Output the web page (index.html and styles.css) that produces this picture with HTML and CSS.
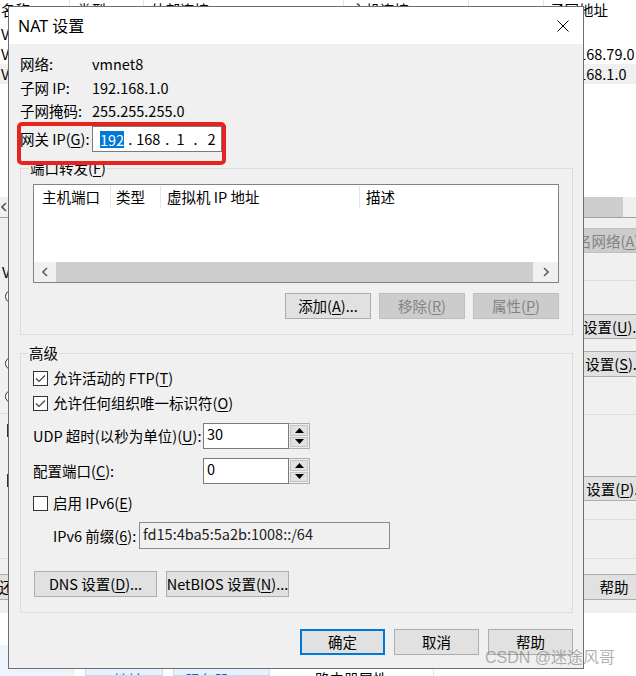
FILE: index.html
```html
<!DOCTYPE html>
<html lang="zh-CN">
<head>
<meta charset="utf-8">
<title>NAT 设置</title>
<link rel="stylesheet" href="styles.css">
</head>
<body>
<div class="desktop">
  <div class="bgwin">
    <div class="bg-list">
      <div class="bg-head">
        <div class="bg-cell c1">名称</div>
        <div class="bg-cell c2">类型</div>
        <div class="bg-cell c3">外部连接</div>
        <div class="bg-cell c4">主机连接</div>
        <div class="bg-cell c5"></div>
        <div class="bg-cell c6">子网地址</div>
      </div>
      <div class="bg-row">
        <div class="bg-cell c1">VMnet0</div>
        <div class="bg-cell c2">桥接模式</div>
        <div class="bg-cell c3">自动桥接</div>
        <div class="bg-cell c4">-</div>
        <div class="bg-cell c5">-</div>
        <div class="bg-cell c6"></div>
      </div>
      <div class="bg-row">
        <div class="bg-cell c1">VMnet1</div>
        <div class="bg-cell c2">仅主机</div>
        <div class="bg-cell c3">-</div>
        <div class="bg-cell c4">已连接</div>
        <div class="bg-cell c5">已启用</div>
        <div class="bg-cell c6">192.168.79.0</div>
      </div>
      <div class="bg-row sel">
        <div class="bg-cell c1">VMnet8</div>
        <div class="bg-cell c2">NAT 模式</div>
        <div class="bg-cell c3">NAT 模式</div>
        <div class="bg-cell c4">已连接</div>
        <div class="bg-cell c5">已启用</div>
        <div class="bg-cell c6">192.168.1.0</div>
      </div>
    </div>
    <div class="bg-hscroll">
      <div class="hs-arrow"><svg width="6" height="10" viewBox="0 0 6 10"><polyline points="5,1 1,5 5,9" fill="none" stroke="#555" stroke-width="1.6"/></svg></div>
      <div class="hs-thumb"></div>
      <div class="hs-end"></div>
    </div>
    <div class="bg-panel">
      <div class="bg-main">
        <div class="bg-left">
          <div class="bg-text">VMnet 信息</div>
          <div class="bg-radio r-a"></div>
          <div class="bg-radio r-b"></div>
          <div class="bg-radio r-c"></div>
          <div class="bg-hr l-hr"></div>
          <div class="bg-box b-a"></div>
          <div class="bg-box b-b"></div>
        </div>
        <div class="bg-right">
          <div class="bg-btn dis rb1">重命名网络(<u>A</u>)</div>
          <div class="bg-hr rh1"></div>
          <div class="bg-btn rb2">自动设置(<u>U</u>)...</div>
          <div class="bg-btn rb3">NAT 设置(<u>S</u>)...</div>
          <div class="bg-hr rh2"></div>
          <div class="bg-btn rb4">DHCP 设置(<u>P</u>)...</div>
          <div class="bg-hr rh3"></div>
        </div>
      </div>
      <div class="bg-panel-foot">
        <div class="bg-btn restore">还原默认设置(<u>R</u>)</div>
        <div class="bg-btn help">帮助</div>
      </div>
    </div>
    <div class="bg-gap"></div>
    <div class="bg-foot">
      <div class="bf bf-a"></div>
      <div class="bf bf-b">IP 地址</div>
      <div class="bf bf-c">服务器</div>
      <div class="bf bf-d">路由器属性</div>
    </div>
  </div>

  <div class="dialog">
    <div class="titlebar">
      <span class="title">NAT 设置</span>
      <svg class="close" width="12" height="12" viewBox="0 0 12 12"><path d="M0.5 0.5L11.5 11.5M11.5 0.5L0.5 11.5" stroke="#000" stroke-width="1" fill="none"/></svg>
    </div>
    <div class="dlg-body">
      <div class="info-row r1"><span class="lbl">网络:</span><span>vmnet8</span></div>
      <div class="info-row r2"><span class="lbl">子网 IP:</span><span>192.168.1.0</span></div>
      <div class="info-row r3"><span class="lbl">子网掩码:</span><span>255.255.255.0</span></div>
      <div class="info-row gw">
        <span class="lbl">网关 IP(<u>G</u>):</span>
        <div class="ipbox">
          <span class="ipsel">192</span><span class="ip-d d1">.</span><span class="ip-s s2">168</span><span class="ip-d d2">.</span><span class="ip-s s3">1</span><span class="ip-d d3">.</span><span class="ip-s s4">2</span>
        </div>
      </div>

      <div class="group g1">
        <div class="group-title">端口转发(<u>F</u>)</div>
        <div class="listview">
          <div class="lv-head">
            <div class="lv-h h1">主机端口</div>
            <div class="lv-h h2">类型</div>
            <div class="lv-h h3">虚拟机 IP 地址</div>
            <div class="lv-h h4">描述</div>
          </div>
          <div class="lv-space"></div>
          <div class="lv-scroll">
            <div class="lv-arrow la"><svg width="6" height="10" viewBox="0 0 6 10"><polyline points="5,1 1,5 5,9" fill="none" stroke="#606060" stroke-width="1.6"/></svg></div>
            <div class="lv-thumb"></div>
            <div class="lv-arrow ra"><svg width="6" height="10" viewBox="0 0 6 10"><polyline points="1,1 5,5 1,9" fill="none" stroke="#606060" stroke-width="1.6"/></svg></div>
          </div>
        </div>
        <div class="btn-row">
          <div class="btn">添加(<u>A</u>)...</div>
          <div class="btn dis">移除(<u>R</u>)</div>
          <div class="btn dis">属性(<u>P</u>)</div>
        </div>
      </div>

      <div class="group g2">
        <div class="group-title">高级</div>
        <div class="cb-row cr1">
          <svg class="cb" width="15" height="15" viewBox="0 0 15 15"><rect x="0.5" y="0.5" width="14" height="14" fill="#fff" stroke="#333"/><polyline points="3,7.5 6,10.5 12,4.5" fill="none" stroke="#444" stroke-width="1.2"/></svg>
          <span>允许活动的 FTP(<u>T</u>)</span>
        </div>
        <div class="cb-row cr2">
          <svg class="cb" width="15" height="15" viewBox="0 0 15 15"><rect x="0.5" y="0.5" width="14" height="14" fill="#fff" stroke="#333"/><polyline points="3,7.5 6,10.5 12,4.5" fill="none" stroke="#444" stroke-width="1.2"/></svg>
          <span>允许任何组织唯一标识符(<u>O</u>)</span>
        </div>
        <div class="spin-row sr1">
          <span class="spin-lbl">UDP 超时(以秒为单位)(<u>U</u>):</span>
          <div class="spin">
            <div class="spin-field">30</div>
            <div class="spin-btns">
              <div class="spin-b"><svg width="9" height="5" viewBox="0 0 9 5"><polygon points="4.5,0 9,5 0,5" fill="#000"/></svg></div>
              <div class="spin-b"><svg width="9" height="5" viewBox="0 0 9 5"><polygon points="0,0 9,0 4.5,5" fill="#000"/></svg></div>
            </div>
          </div>
        </div>
        <div class="spin-row sr2">
          <span class="spin-lbl">配置端口(<u>C</u>):</span>
          <div class="spin">
            <div class="spin-field">0</div>
            <div class="spin-btns">
              <div class="spin-b"><svg width="9" height="5" viewBox="0 0 9 5"><polygon points="4.5,0 9,5 0,5" fill="#000"/></svg></div>
              <div class="spin-b"><svg width="9" height="5" viewBox="0 0 9 5"><polygon points="0,0 9,0 4.5,5" fill="#000"/></svg></div>
            </div>
          </div>
        </div>
        <div class="cb-row cr3">
          <svg class="cb" width="15" height="15" viewBox="0 0 15 15"><rect x="0.5" y="0.5" width="14" height="14" fill="#fff" stroke="#333"/></svg>
          <span>启用 IPv6(<u>E</u>)</span>
        </div>
        <div class="v6-row">
          <span class="v6-lbl">IPv6 前缀(<u>6</u>):</span>
          <div class="v6-field">fd15:4ba5:5a2b:1008::/64</div>
        </div>
        <div class="dns-row">
          <div class="btn">DNS 设置(<u>D</u>)...</div>
          <div class="btn">NetBIOS 设置(<u>N</u>)...</div>
        </div>
      </div>

      <div class="dlg-foot">
        <div class="btn def">确定</div>
        <div class="btn">取消</div>
        <div class="btn">帮助</div>
      </div>
    </div>
  </div>

  <div class="highlight"></div>
  <div class="watermark">CSDN @迷途风哥</div>
</div>
</body>
</html>
```

FILE: styles.css
```css
* { box-sizing: border-box; }
html, body { margin: 0; padding: 0; }
body {
  width: 636px;
  height: 676px;
  overflow: hidden;
  background: #fff;
  font-family: "Microsoft YaHei UI", "Noto Sans CJK SC", "Noto Sans", sans-serif;
  font-size: 14.5px;
  line-height: 20px;
  color: #000;
}
u { text-decoration: underline; text-underline-offset: 2px; }
.desktop { position: relative; width: 636px; height: 676px; overflow: hidden; }

/* ---------- background window ---------- */
.bgwin { display: flex; flex-direction: column; width: 636px; height: 676px; background: #fff; }
.bg-list { height: 197px; flex: 0 0 197px; background: #fff; }
.bg-head, .bg-row { display: flex; height: 20px; white-space: nowrap; }
.bg-head { margin-bottom: 4px; }
.bg-cell { flex: 0 0 auto; overflow: hidden; padding-left: 7px; border-right: 1px solid transparent; }
.bg-head .bg-cell { border-right-color: #e5e5e5; }
.c1 { width: 70px; padding-left: 1px; }
.c2 { width: 74px; }
.c3 { width: 200px; }
.c4 { width: 125px; }
.c5 { width: 75px; }
.c6 { flex: 1 1 auto; padding-left: 6px; border-right: none; }
.bg-row.sel { background: #f0f0f0; }

.bg-hscroll { display: flex; height: 21px; flex: 0 0 21px; border-bottom: 1px solid #a0a0a0; background: #f0f0f0; }
.hs-arrow { width: 17px; display: flex; align-items: center; padding-left: 1px; }
.hs-thumb { flex: 1; background: #cdcdcd; }
.hs-end { width: 13px; }

.bg-panel { height: 395px; flex: 0 0 395px; background: #f0f0f0; display: flex; flex-direction: column; }
.bg-main { height: 340px; flex: 0 0 340px; display: flex; justify-content: space-between; }
.bg-left { width: 60px; display: flex; flex-direction: column; align-items: flex-start; }
.bg-right { flex: 0 0 110px; margin-right: -14px; display: flex; flex-direction: column; }
.bg-text { margin-top: 44px; padding-left: 2px; white-space: nowrap; }
.bg-radio { width: 13px; height: 13px; border: 1px solid #333; border-radius: 50%; background: #fff; margin-left: 5px; }
.r-a { margin-top: 8px; }
.r-b { margin-top: 54px; }
.r-c { margin-top: 20px; }
.bg-hr { height: 1px; background: #dcdcdc; align-self: stretch; }
.l-hr { margin-top: 10px; }
.bg-box { width: 13px; height: 13px; border: 1px solid #333; background: #fff; margin-left: 7px; }
.b-a { margin-top: 10px; }
.b-b { margin-top: 37px; }

.bg-btn { height: 25px; border: 1px solid #adadad; background: #e1e1e1; text-align: center; line-height: 23px; white-space: nowrap; overflow: hidden; }
.bg-right .bg-btn { text-align: left; }
.bg-btn.dis { background: #cccccc; border-color: #bfbfbf; color: #838383; }
.rb1 { margin-top: 10px; padding-left: 7px; }
.rh1 { margin-top: 27px; }
.rb2 { margin-top: 33px; padding-left: 13px; }
.rb3 { margin-top: 12px; height: 26px; padding-left: 14px; }
.rh2 { margin-top: 37px; }
.rb4 { margin-top: 61px; padding-left: 3px; }
.rh3 { margin-top: 18px; }

.bg-panel-foot { height: 55px; flex: 0 0 55px; border-top: 1px solid #dcdcdc; padding-top: 15px; display: flex; justify-content: space-between; }
.bg-panel-foot .bg-btn { height: 26px; line-height: 24px; }
.restore { width: 130px; margin-left: -30px; padding-left: 28px; text-align: left; }
.help { width: 86px; margin-right: -21px; }

.bg-gap { height: 32px; flex: 0 0 32px; background: #fff; }
.bg-foot { height: 31px; flex: 0 0 31px; display: flex; background: #fff; }
.bf { height: 31px; overflow: hidden; padding-top: 24px; white-space: nowrap; }
.bf-a { width: 75px; background: #eef4fb; }
.bf-b { width: 78px; margin-left: 10px; background: #e8f1fb; border: 1px solid #c7dbf3; color: #1f5fbf; padding-left: 11px; }
.bf-c { width: 97px; margin-left: 10px; background: #e8f1fb; border: 1px solid #c7dbf3; color: #1f5fbf; padding-left: 11px; }
.bf-d { width: 154px; margin-left: 10px; border-right: 1px solid #e5e5e5; padding-left: 35px; }

/* ---------- dialog ---------- */
.dialog {
  position: absolute;
  left: 8px;
  top: 6px;
  width: 576px;
  height: 663px;
  border: 1px solid #6e6e6e;
  background: #f0f0f0;
  display: flex;
  flex-direction: column;
}
.titlebar { height: 37px; flex: 0 0 37px; background: #fff; display: flex; align-items: center; justify-content: space-between; padding-left: 9px; }
.title { font-family: "Noto Sans", "Noto Sans CJK SC", sans-serif; font-size: 16px; }
.close { margin-right: 14px; }

.dlg-body { padding: 10px 10px 0 11px; display: flex; flex-direction: column; }
.info-row { display: flex; align-items: center; height: 20px; white-space: nowrap; }
.r2 { margin-top: 4px; }
.r3 { margin-top: 3px; }
.gw { margin-top: 5px; height: 26px; }
.lbl { width: 72px; flex: 0 0 72px; }
.ipbox { width: 130px; height: 26px; border: 1px solid #7a7a7a; background: #fff; display: flex; align-items: center; padding-left: 7px; }
.ipsel { background: #0078d7; color: #fff; line-height: 17px; }
.d1 { margin-left: 4px; }
.s2 { margin-left: 4px; }
.d2 { margin-left: 5px; }
.s3 { margin-left: 7px; }
.d3 { margin-left: 9px; }
.s4 { margin-left: 10px; }

.group { border: 1px solid #dcdcdc; display: flex; flex-direction: column; padding: 0 13px 15px 12px; }
.g1 { margin-top: 16px; }
.g2 { margin-top: 18px; }
.group-title { align-self: flex-start; height: 20px; margin: -11px 0 0 -4px; padding: 0 1px; background: #f0f0f0; white-space: nowrap; }
.g2 .group-title { margin-left: -5px; }

.listview { margin-top: 6px; height: 99px; border: 1px solid #828282; background: #fff; display: flex; flex-direction: column; }
.lv-head { display: flex; height: 24px; align-items: center; }
.lv-h { height: 22px; line-height: 22px; border-right: 1px solid #e5e5e5; white-space: nowrap; }
.h1 { width: 77px; padding-left: 8px; }
.h2 { width: 50px; padding-left: 5px; }
.h3 { width: 199px; padding-left: 6px; }
.h4 { flex: 1; padding-left: 6px; border-right: none; }
.lv-space { flex: 1; }
.lv-scroll { height: 20px; display: flex; background: #f0f0f0; }
.lv-arrow { display: flex; align-items: center; justify-content: center; }
.la { width: 22px; }
.ra { width: 25px; }
.lv-thumb { flex: 1; background: #cdcdcd; }

.btn { height: 26px; border: 1px solid #adadad; background: #e1e1e1; display: flex; align-items: center; justify-content: center; white-space: nowrap; }
.btn.dis { background: #cccccc; border-color: #bfbfbf; color: #838383; }
.btn.def { border: 2px solid #0078d7; }
.btn-row { display: flex; justify-content: flex-end; gap: 8px; margin-top: 10px; }
.btn-row .btn { width: 86px; }

.cb-row { display: flex; align-items: center; height: 20px; white-space: nowrap; }
.cb { flex: 0 0 15px; margin-right: 5px; }
.cr1 { margin-top: 5px; }
.cr2 { margin-top: 5px; }
.cr3 { margin-top: 9px; }

.spin-row { display: flex; align-items: center; height: 26px; white-space: nowrap; }
.sr1 { margin-top: 10px; }
.sr2 { margin-top: 9px; }
.spin-lbl { width: 170px; flex: 0 0 170px; }
.spin { display: flex; width: 107px; height: 26px; }
.spin-field { flex: 1; border: 1px solid #7a7a7a; background: #fff; padding: 0 3px; line-height: 20px; }
.spin-btns { width: 21px; display: flex; flex-direction: column; gap: 1px; padding: 1px; border: 1px solid #adadad; border-left: none; background: #f0f0f0; }
.spin-b { flex: 1; background: #e1e1e1; border: 1px solid #c4c4c4; display: flex; align-items: center; justify-content: center; }

.v6-row { display: flex; align-items: center; margin-top: 9px; padding-left: 20px; white-space: nowrap; }
.v6-lbl { width: 86px; flex: 0 0 86px; }
.v6-field { width: 251px; height: 27px; border: 1px solid #8a8a8a; background: #f0f0f0; padding: 0 3px; line-height: 22px; color: #222; }

.dns-row { display: flex; gap: 9px; margin-top: 22px; margin-left: 1px; }
.dns-row .btn { width: 123px; }

.dlg-foot { display: flex; justify-content: flex-end; gap: 9px; margin-top: 16px; }
.dlg-foot .btn { width: 85px; }

/* ---------- overlays ---------- */
.highlight { position: absolute; left: 17px; top: 122px; width: 209px; height: 43px; border: 4px solid #e8221c; border-radius: 5px; }
.watermark {
  position: absolute;
  left: 485px;
  top: 648px;
  font-family: "Liberation Sans", "Noto Sans CJK SC", sans-serif;
  font-size: 16px;
  line-height: 20px;
  color: rgba(100, 100, 100, 0.5);
  white-space: nowrap;
}
```
